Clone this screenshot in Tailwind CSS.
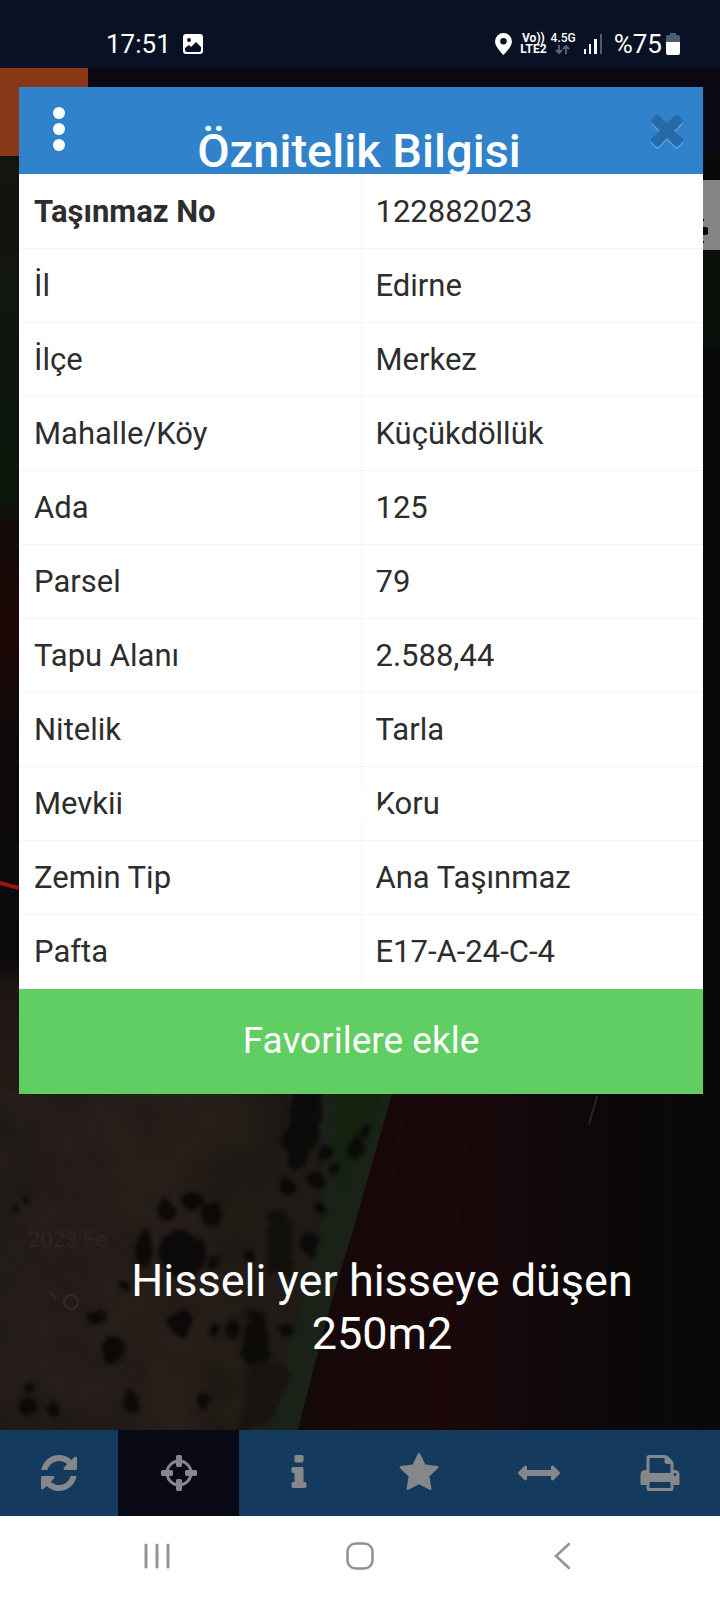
<!DOCTYPE html>
<html lang="tr">
<head>
  <meta charset="UTF-8">
  <meta name="viewport" content="width=device-width, initial-scale=1.0">
  <title>Öznitelik Bilgisi</title>
  <script src="https://cdn.jsdelivr.net/npm/@tailwindcss/browser@4"></script>
</head>
<body class="flex min-h-screen flex-col bg-white font-['Roboto',sans-serif] text-white">
  <!-- Status bar -->
  <header class="flex h-17 items-center justify-between bg-[#091124] pt-5 pr-10 pl-[106px]">
    <div class="flex items-center gap-3">
      <span class="text-[26px] leading-8">17:51</span>
      <svg class="size-5" viewBox="0 0 20 20" fill="none" aria-hidden="true">
        <rect width="20" height="20" rx="3" fill="#fff"/>
        <circle cx="6" cy="6" r="2" fill="#091124"/>
        <path d="M2 14l4-3 2 2 5-5 5 5v3q0 2-2 2H4q-2 0-2-2z" fill="#091124"/>
      </svg>
    </div>
    <div class="flex items-center gap-2">
      <svg class="h-[22px] w-[17px]" viewBox="0 0 17 22" aria-hidden="true">
        <path fill="#fff" fill-rule="evenodd" d="M8.500 0a8.500 8.500 0 0 1 8.500 8.500C17 14 8.500 22 8.500 22S0 14 0 8.500A8.500 8.500 0 0 1 8.500 0zm0 5a3.300 3.300 0 1 0 0 6.600 3.300 3.300 0 0 0 0-6.600z"/>
      </svg>
      <div class="flex gap-1 text-[12px] leading-[11px] font-bold">
        <div class="text-center">
          <div>Vo))</div>
          <div>LTE2</div>
        </div>
        <div class="flex flex-col items-center font-medium">
          <div>4.5G</div>
          <svg class="h-[11px] w-4" viewBox="0 0 16 11" fill="none" stroke="#59697a" stroke-width="1.800" aria-hidden="true">
            <path d="M4 1v8M1 6l3 3 3-3M11 10V2M8 5l3-3 3 3"/>
          </svg>
        </div>
      </div>
      <svg class="h-5 w-[18px]" viewBox="0 0 18 20" aria-hidden="true">
        <path fill="#fff" d="M0 15h2v5H0zM5 10h2v10H5zM10 5h3v15h-3z"/>
        <path fill="#4b5f70" d="M16 0h2v20h-2z"/>
      </svg>
      <div class="flex items-center gap-1 pl-1">
        <span class="text-[26px] leading-8">%75</span>
        <svg class="h-[22px] w-[14px]" viewBox="0 0 14 22" aria-hidden="true">
          <path fill="#4b5f70" d="M4 0h6v2h2q2 0 2 2v6H0V4q0-2 2-2h2z"/>
          <path fill="#fff" d="M0 9h14v11q0 2-2 2H2q-2 0-2-2z"/>
        </svg>
      </div>
    </div>
  </header>

  <main class="relative flex flex-1 flex-col bg-[#0a0a0a]">
    <!-- Map view with the app bar behind the dialog -->
    <div class="relative flex min-h-[1200px] flex-1 flex-col">
      <div class="flex h-22 bg-[#0b0814]">
        <div class="w-22 bg-[#883817]"></div>
      </div>
      <svg class="absolute inset-x-0 top-22 bottom-0 h-[calc(100%-88px)] w-full" viewBox="0 156 720 1274" preserveAspectRatio="xMidYMid slice" aria-hidden="true">
        <defs>
          <filter id="soft" x="-50%" y="-20%" width="200%" height="140%" color-interpolation-filters="sRGB"><feGaussianBlur stdDeviation="2"/></filter>
          <filter id="edge" x="-10%" y="-10%" width="120%" height="120%" color-interpolation-filters="sRGB">
            <feTurbulence type="fractalNoise" baseFrequency="0.06" numOctaves="2" seed="4" result="n"/>
            <feDisplacementMap in="SourceGraphic" in2="n" scale="12" xChannelSelector="R" yChannelSelector="G"/>
            <feGaussianBlur stdDeviation="2.200"/>
          </filter>
          <filter id="grain" x="0" y="0" width="100%" height="100%" color-interpolation-filters="sRGB">
            <feTurbulence type="fractalNoise" baseFrequency="0.02" numOctaves="3" seed="8"/>
            <feColorMatrix values="0 0 0 0 0.030  0 0 0 0 0.030  0 0 0 0 0.020  2 0 0 0 -0.800"/>
            <feComposite in2="SourceGraphic" operator="in"/>
          </filter>
          <linearGradient id="soil" x1="0" x2="1" y1="0" y2="0">
            <stop offset="0" stop-color="#241d1a"/>
            <stop offset="0.450" stop-color="#281f1a"/>
            <stop offset="0.700" stop-color="#201b16"/>
            <stop offset="1" stop-color="#1c1914"/>
          </linearGradient>
          <linearGradient id="field" x1="0" x2="1" y1="0" y2="0">
            <stop offset="0" stop-color="#150809"/>
            <stop offset="0.350" stop-color="#1a080a"/>
            <stop offset="0.700" stop-color="#0d0809"/>
            <stop offset="1" stop-color="#090909"/>
          </linearGradient>
          <linearGradient id="side" x1="0" x2="0" y1="0" y2="1">
            <stop offset="0" stop-color="#13150e"/>
            <stop offset="0.200" stop-color="#10160e"/>
            <stop offset="0.360" stop-color="#0b180c"/>
            <stop offset="0.390" stop-color="#120b08"/>
            <stop offset="0.500" stop-color="#1e0807"/>
            <stop offset="0.620" stop-color="#0e0909"/>
            <stop offset="0.850" stop-color="#0b0a0a"/>
            <stop offset="0.880" stop-color="#1d1613"/>
            <stop offset="1" stop-color="#241b17"/>
          </linearGradient>
        </defs>
        <rect y="156" width="720" height="1274" fill="#090909"/>
        <rect y="156" width="40" height="944" fill="url(#side)"/>
        <rect x="690" y="180" width="30" height="165" fill="#09110a"/>
        <path d="M0 1090h396l-90 340H0z" fill="url(#soil)"/>
        <g filter="url(#edge)">
          <path d="M322 1080h76l-46 170-54 190h-36l20-80 24-70 16-70z" fill="#1a2218"/>
          <path d="M334 1080h52l-16 60-26 60-10-30z" fill="#14220f"/>
          <path d="M292 1080h30l-2 50-14 34-14 8-8-30z" fill="#0b0b0a"/>
          <path d="M266 1212l18-4 12 30-4 40-24-6z" fill="#12100d"/>
          <path d="M248 1310l18 4 4 36-16 24-10-20z" fill="#0d0c0a"/>
          <path d="M250 1364l36-4 4 20-20 40-30 14z" fill="#181410"/>
        </g>
        <path d="M396 1080h324v350H298q30-120 55-200z" fill="url(#field)"/>
        <path d="M0 1090h290l-40 340H0z" filter="url(#grain)" opacity="0.250"/>
        <g fill="#0b0909" filter="url(#edge)">
          <ellipse cx="182" cy="1254" rx="22" ry="24"/>
          <ellipse cx="144" cy="1248" rx="9" ry="18"/>
          <circle cx="192" cy="1201" r="11"/>
          <ellipse cx="166" cy="1210" rx="8" ry="11"/>
          <ellipse cx="212" cy="1214" rx="10" ry="12"/>
          <ellipse cx="180" cy="1324" rx="13" ry="13"/>
          <ellipse cx="113" cy="1350" rx="11" ry="13"/>
          <ellipse cx="130" cy="1402" rx="9" ry="11"/>
          <ellipse cx="97" cy="1317" rx="8" ry="8"/>
          <circle cx="248" cy="1256" r="7"/>
          <circle cx="203" cy="1400" r="7"/>
          <circle cx="29" cy="1406" r="8"/>
          <circle cx="29" cy="1388" r="5"/>
          <circle cx="52" cy="1408" r="6"/>
          <circle cx="15" cy="1210" r="4"/>
          <circle cx="25" cy="1199" r="4"/>
          <circle cx="212" cy="1262" r="6"/>
          <circle cx="213" cy="1330" r="6"/>
          <ellipse cx="234" cy="1328" rx="6" ry="9"/>
          <circle cx="124" cy="1286" r="6"/>
          <circle cx="356" cy="1148" r="9"/>
          <circle cx="364" cy="1133" r="5"/>
          <circle cx="326" cy="1152" r="7"/>
          <circle cx="334" cy="1170" r="6"/>
          <circle cx="316" cy="1180" r="8"/>
          <circle cx="286" cy="1186" r="8"/>
          <circle cx="319" cy="1207" r="5"/>
          <ellipse cx="309" cy="1244" rx="7" ry="12"/>
          <circle cx="286" cy="1330" r="6"/>
        </g>
        <g fill="none" stroke="#260a0b" stroke-width="2" filter="url(#soft)">
          <path d="M475 1094q-24 120-32 330"/>
          <path d="M405 1094q-20 160-70 330"/>
        </g>
        <path d="M597 1096l-8 28" stroke="#3a1f1c" stroke-width="2"/>
        <path d="M0 883l19 5" stroke="#a01212" stroke-width="4"/>
        <path d="M702 180h18v70h-18z" fill="#858585"/>
        <path d="M702 227h4l2 1v6l-2 1h-4zM702 219h2v2h-2zM702 241h2v2h-2z" fill="#090909"/>
        <text x="28" y="1247" fill="#2d2521" font-size="22">2023 Fe</text>
        <g fill="none" stroke="#332b27" stroke-width="2">
          <circle cx="71" cy="1302" r="7"/>
          <path d="M49 1293q8 2 5 7"/>
        </g>
      </svg>

      <!-- Caption over the map -->
      <p class="absolute inset-x-0 bottom-[70px] pl-11 text-center text-[45px] leading-[53px]">Hisseli yer hisseye düşen<br>250m2</p>
    </div>

    <!-- Toolbar -->
    <nav class="flex h-[86px] bg-[#143a5d] text-[#85878a]">
      <button type="button" aria-label="Yenile" class="flex flex-[118] items-center justify-center">
        <svg class="size-[42px]" viewBox="0 0 1792 1792" fill="currentColor"><path d="M1639 1056q0 5-1 7-64 268-268 434.500t-478 166.500q-146 0-282.500-55t-243.500-157l-129 129q-19 19-45 19t-45-19-19-45v-448q0-26 19-45t45-19h448q26 0 45 19t19 45-19 45l-137 137q71 66 161 102t187 36q134 0 250-65t186-179q11-17 53-117 8-23 30-23h192q13 0 22.500 9.500t9.500 22.500zm25-800v448q0 26-19 45t-45 19h-448q-26 0-45-19t-19-45 19-45l138-138q-148-137-349-137-134 0-250 65t-186 179q-11 17-53 117-8 23-30 23h-199q-13 0-22.500-9.500t-9.500-22.500v-7q65-268 270-434.500t480-166.500q146 0 284 55.500t245 156.500l130-129q19-19 45-19t45 19 19 45z"/></svg>
      </button>
      <button type="button" aria-label="Konum" aria-pressed="true" class="flex flex-[121] items-center justify-center bg-[#080914]">
        <svg class="size-[42px]" viewBox="0 0 1792 1792" fill="currentColor"><path d="M1325 1024h-109q-26 0-45-19t-19-45v-128q0-26 19-45t45-19h109q-32-108-112.500-188.500t-188.500-112.500v109q0 26-19 45t-45 19h-128q-26 0-45-19t-19-45v-109q-108 32-188.500 112.500t-112.500 188.500h109q26 0 45 19t19 45v128q0 26-19 45t-45 19h-109q32 108 112.500 188.500t188.500 112.500v-109q0-26 19-45t45-19h128q26 0 45 19t19 45v109q108-32 188.500-112.500t112.500-188.500zm339-192v128q0 26-19 45t-45 19h-143q-37 161-154.500 278.500t-278.500 154.500v143q0 26-19 45t-45 19h-128q-26 0-45-19t-19-45v-143q-161-37-278.500-154.500t-154.500-278.500h-143q-26 0-45-19t-19-45v-128q0-26 19-45t45-19h143q37-161 154.500-278.500t278.500-154.500v-143q0-26 19-45t45-19h128q26 0 45 19t19 45v143q161 37 278.500 154.500t154.500 278.500h143q26 0 45 19t19 45z"/></svg>
      </button>
      <button type="button" aria-label="Bilgi" class="flex flex-[120] items-center justify-center">
        <svg class="size-[42px]" viewBox="0 0 1792 1792" fill="currentColor"><path d="M1216 1344v128q0 26-19 45t-45 19h-512q-26 0-45-19t-19-45v-128q0-26 19-45t45-19h64v-384h-64q-26 0-45-19t-19-45v-128q0-26 19-45t45-19h384q26 0 45 19t19 45v576h64q26 0 45 19t19 45zm-128-1152v192q0 26-19 45t-45 19h-256q-26 0-45-19t-19-45v-192q0-26 19-45t45-19h256q26 0 45 19t19 45z"/></svg>
      </button>
      <button type="button" aria-label="Favoriler" class="flex flex-[120] items-center justify-center">
        <svg class="size-[42px]" viewBox="0 0 1792 1792" fill="currentColor"><path d="M1728 647q0 22-26 48l-363 354 86 500q1 7 1 20 0 21-10.500 35.500t-30.500 14.500q-19 0-40-12l-449-236-449 236q-22 12-40 12-21 0-31.500-14.500t-10.500-35.500q0-6 2-20l86-500-364-354q-25-27-25-48 0-37 56-46l502-73 225-455q19-41 49-41t49 41l225 455 502 73q56 9 56 46z"/></svg>
      </button>
      <button type="button" aria-label="Ölçüm" class="flex flex-[120] items-center justify-center">
        <svg class="size-[42px]" viewBox="0 0 1792 1792" fill="currentColor"><path d="M1792 896q0 26-19 45l-256 256q-19 19-45 19t-45-19-19-45v-128h-1024v128q0 26-19 45t-45 19-45-19l-256-256q-19-19-19-45t19-45l256-256q19-19 45-19t45 19 19 45v128h1024v-128q0-26 19-45t45-19 45 19l256 256q19 19 19 45z"/></svg>
      </button>
      <button type="button" aria-label="Yazdır" class="flex flex-[121] items-center justify-center">
        <svg class="size-[42px]" viewBox="0 0 1792 1792" fill="currentColor"><path d="M448 1536h896v-256h-896v256zm0-640h896v-384h-160q-40 0-68-28t-28-68v-160h-640v640zm1152 64q0-26-19-45t-45-19-45 19-19 45 19 45 45 19 45-19 19-45zm128 0v416q0 13-9.500 22.500t-22.500 9.500h-224v160q0 40-28 68t-68 28h-960q-40 0-68-28t-28-68v-160h-224q-13 0-22.500-9.500t-9.500-22.500v-416q0-79 56.500-135.500t135.500-56.500h64v-544q0-40 28-68t68-28h672q40 0 88 20t76 48l152 152q28 28 48 76t20 88v256h64q79 0 135.500 56.500t56.500 135.500z"/></svg>
      </button>
    </nav>

    <!-- Dialog -->
    <section class="absolute top-[19px] right-[17px] left-[19px] bg-white text-[#2d2d2d]" role="dialog" aria-labelledby="dialogTitle">
      <div class="flex h-[87px] items-start overflow-hidden bg-[#3082ca] pr-1 pl-3 text-white">
        <button type="button" aria-label="Menü" class="flex h-20 w-14 items-center justify-center pt-1">
          <svg class="h-11 w-3" viewBox="0 0 12 44" fill="currentColor"><circle cx="6" cy="6" r="6"/><circle cx="6" cy="22" r="6"/><circle cx="6" cy="38" r="6"/></svg>
        </button>
        <h1 id="dialogTitle" class="flex-1 pt-9 pr-1 text-center text-[47px] leading-14 font-medium">Öznitelik Bilgisi</h1>
        <button type="button" aria-label="Kapat" class="flex h-[84px] w-16 items-center justify-center text-[#266ba8] drop-shadow-[0_2px_0_#5b9fdb]">
          <svg class="size-12" viewBox="0 0 1792 1792" fill="currentColor"><path d="M1490 1322q0 40-28 68l-136 136q-28 28-68 28t-68-28l-294-294-294 294q-28 28-68 28t-68-28l-136-136q-28-28-28-68t28-68l294-294-294-294q-28-28-28-68t28-68l136-136q28-28 68-28t68 28l294 294 294-294q28-28 68-28t68 28l136 136q28 28 28 68t-28 68l-294 294 294 294q28 28 28 68z"/></svg>
        </button>
      </div>
      <table class="w-full table-fixed text-left text-[31px] leading-9 [&_td]:px-[14px] [&_td]:pt-[2px] [&_th]:border-r [&_th]:border-[#f5f5f5] [&_th]:px-[15px] [&_th]:pt-[2px] [&_th]:font-normal [&_tr]:h-[74px] [&_tr]:border-b [&_tr]:border-[#f5f5f5]">
        <tbody>
          <tr><th scope="row"><b>Taşınmaz No</b></th><td>122882023</td></tr>
          <tr><th scope="row">İl</th><td>Edirne</td></tr>
          <tr><th scope="row">İlçe</th><td>Merkez</td></tr>
          <tr><th scope="row">Mahalle/Köy</th><td>Küçükdöllük</td></tr>
          <tr><th scope="row">Ada</th><td>125</td></tr>
          <tr><th scope="row">Parsel</th><td>79</td></tr>
          <tr><th scope="row">Tapu Alanı</th><td>2.588,44</td></tr>
          <tr><th scope="row">Nitelik</th><td>Tarla</td></tr>
          <tr>
            <th scope="row">Mevkii</th>
            <td class="relative">
              Koru
              <!-- Erased stroke across the cell -->
              <svg class="absolute top-0 -left-1 h-[74px] w-8" viewBox="0 0 32 74" aria-hidden="true">
                <path d="M0 20h8v34H0z" fill="#fff"/>
                <path d="M17 51L30 37" stroke="#fff" stroke-width="5"/>
              </svg>
            </td>
          </tr>
          <tr><th scope="row">Zemin Tip</th><td>Ana Taşınmaz</td></tr>
          <tr><th scope="row">Pafta</th><td>E17-A-24-C-4</td></tr>
        </tbody>
      </table>
      <button type="button" class="block h-[105px] w-full bg-[#60ce62] text-[37px] text-white">Favorilere ekle</button>
    </section>
  </main>

  <!-- Android navigation -->
  <nav class="flex h-21 items-center justify-around bg-white pr-14 pb-1 pl-14 text-[#939393]">
    <button type="button" aria-label="Son uygulamalar">
      <svg class="h-7 w-7" viewBox="0 0 28 28" fill="none" stroke="currentColor" stroke-width="3" stroke-linecap="round"><path d="M3 3v22M14 3v22M25 3v22"/></svg>
    </button>
    <button type="button" aria-label="Ana ekran">
      <svg class="h-7 w-7" viewBox="0 0 28 28" fill="none" stroke="currentColor" stroke-width="2.500"><rect x="1.500" y="1.500" width="25" height="25" rx="8"/></svg>
    </button>
    <button type="button" aria-label="Geri">
      <svg class="h-7 w-7" viewBox="0 0 28 28" fill="none" stroke="currentColor" stroke-width="2.500" stroke-linecap="round"><path d="M20 2L7 14l13 12"/></svg>
    </button>
  </nav>
</body>
</html>
